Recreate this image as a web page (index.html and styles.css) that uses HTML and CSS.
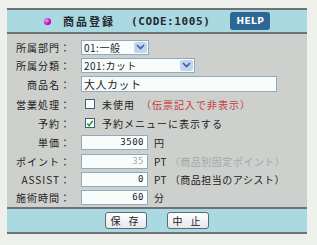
FILE: index.html
```html
<!DOCTYPE html>
<html lang="ja">
<head>
    <meta charset="UTF-8">
    <title>商品登録</title>
    <link rel="stylesheet" href="styles.css">
</head>
<body>
    <div class="panel">
        <!-- title bar -->
        <div class="head">
            <span class="dot"></span>
            <span class="title">商品登録</span>
            <span class="code">(CODE:1005)</span>
            <span class="help">HELP</span>
        </div>

        <div class="form">
            <div class="row">
                <span class="label">所属部門：</span>
                <span class="select short">01:一般<span class="arrow"><svg width="9" height="6" viewBox="0 0 9 6"><path d="M1 1l3.5 3.5L8 1" fill="none" stroke="#3d5f9a" stroke-width="1.6"/></svg></span></span>
            </div>
            <div class="row">
                <span class="label">所属分類：</span>
                <span class="select long">201:カット<span class="arrow"><svg width="9" height="6" viewBox="0 0 9 6"><path d="M1 1l3.5 3.5L8 1" fill="none" stroke="#3d5f9a" stroke-width="1.6"/></svg></span></span>
            </div>
            <div class="row tall">
                <span class="label">商品名：</span>
                <span class="input name">大人カット</span>
            </div>
            <div class="row tall">
                <span class="label">営業処理：</span>
                <span class="check"></span>
                <span class="opt">未使用</span>
                <span class="note">（伝票記入で非表示）</span>
            </div>
            <div class="row">
                <span class="label">予約：</span>
                <span class="check on"><svg width="9" height="9" viewBox="0 0 9 9"><path d="M1.5 4.5l2 2.5L7.5 1.5" fill="none" stroke="#2f9a2f" stroke-width="1.8"/></svg></span>
                <span class="opt">予約メニューに表示する</span>
            </div>
            <div class="row tall">
                <span class="label">単価：</span>
                <span class="input num">3500</span>
                <span class="unit">円</span>
            </div>
            <div class="row">
                <span class="label">ポイント：</span>
                <span class="input num off">35</span>
                <span class="unit">PT <span class="gray">（商品別固定ポイント）</span></span>
            </div>
            <div class="row">
                <span class="label">ASSIST：</span>
                <span class="input num">0</span>
                <span class="unit">PT （商品担当のアシスト）</span>
            </div>
            <div class="row">
                <span class="label">施術時間：</span>
                <span class="input num">60</span>
                <span class="unit">分</span>
            </div>
        </div>

        <div class="foot">
            <span class="btn">保 存</span>
            <span class="btn">中 止</span>
        </div>
    </div>
</body>
</html>
```

FILE: styles.css
```css
/* page */
body {
    margin: 0;
    background-color: #eef0ec;
    font-family: "Noto Sans CJK JP", "DejaVu Sans", sans-serif;
    font-size: 10px;
    color: #222;
}

.panel {
    margin: 8px 0 0 7px;
    width: 300px;
}

/* title bar */
.head {
    height: 22px;
    border-top: 2px solid #6e7272;
    border-bottom: 2px solid #6e7272;
    background-color: #aad9e2;
    display: flex;
    align-items: center;
}

.dot {
    width: 7px;
    height: 7px;
    border-radius: 50%;
    background: radial-gradient(circle at 35% 35%, #f6a0f6, #c000c0 60%, #800080);
    margin-left: 37px;
}

.title {
    margin-left: 12px;
    font-size: 11px;
    font-weight: bold;
    letter-spacing: 2px;
    color: #1e2a30;
}

.code {
    margin-left: 16px;
    font-family: "DejaVu Sans Mono", monospace;
    font-size: 11px;
    font-weight: bold;
    letter-spacing: 0.6px;
    color: #1e2a30;
}

.help {
    margin-left: 20px;
    width: 40px;
    height: 18px;
    line-height: 18px;
    border-radius: 3px;
    background-color: #2c6893;
    color: #fff;
    font-family: "DejaVu Sans", sans-serif;
    font-size: 9px;
    font-weight: bold;
    text-align: center;
    letter-spacing: 0.5px;
}

/* form rows */
.form {
    background-color: #cdd0cc;
    padding: 4px 0 1px;
}

.row {
    height: 18px;
    display: flex;
    align-items: center;
}

.row.tall {
    height: 20px;
}

.label {
    width: 64px;
    text-align: right;
    margin-right: 10px;
    letter-spacing: 1px;
    white-space: nowrap;
}

.select,
.input {
    box-sizing: border-box;
    height: 15px;
    line-height: 13px;
    border: 1px solid #8fa9bf;
    background-color: #f8fdfc;
    padding: 0 2px;
    letter-spacing: 0.5px;
    display: flex;
    align-items: center;
}

.select {
    justify-content: space-between;
    padding-right: 1px;
}

.select.short {
    width: 68px;
}

.select.long {
    width: 114px;
}

.arrow {
    width: 13px;
    height: 11px;
    border-radius: 2px;
    background-color: #c4d4f0;
    display: flex;
    align-items: center;
    justify-content: center;
}

.input.name {
    width: 196px;
    height: 16px;
    font-size: 11px;
}

.input.num {
    width: 67px;
    justify-content: flex-end;
    font-family: "DejaVu Sans Mono", monospace;
    font-size: 9px;
    padding-right: 3px;
}

.input.off {
    color: #a8acac;
}

.check {
    box-sizing: border-box;
    width: 10px;
    height: 10px;
    border: 1px solid #3d5f80;
    background-color: #fff;
    margin-left: 4px;
    display: flex;
    align-items: center;
    justify-content: center;
}

.opt {
    margin-left: 7px;
    letter-spacing: 1px;
}

.note {
    margin-left: 6px;
    color: #c8383a;
    letter-spacing: 1px;
}

.unit {
    margin-left: 6px;
    letter-spacing: 0.5px;
}

.gray {
    color: #a3a8a8;
}

/* bottom bar */
.foot {
    height: 23px;
    border-top: 2px solid #6e7272;
    border-bottom: 2px solid #6e7272;
    background-color: #aad9e2;
    display: flex;
    align-items: center;
    justify-content: center;
    gap: 20px;
}

.btn {
    box-sizing: border-box;
    width: 42px;
    height: 17px;
    line-height: 15px;
    border: 1px solid #5a6a78;
    border-radius: 3px;
    background: linear-gradient(#ffffff, #e4e8ec);
    text-align: center;
    letter-spacing: 3px;
}
```
